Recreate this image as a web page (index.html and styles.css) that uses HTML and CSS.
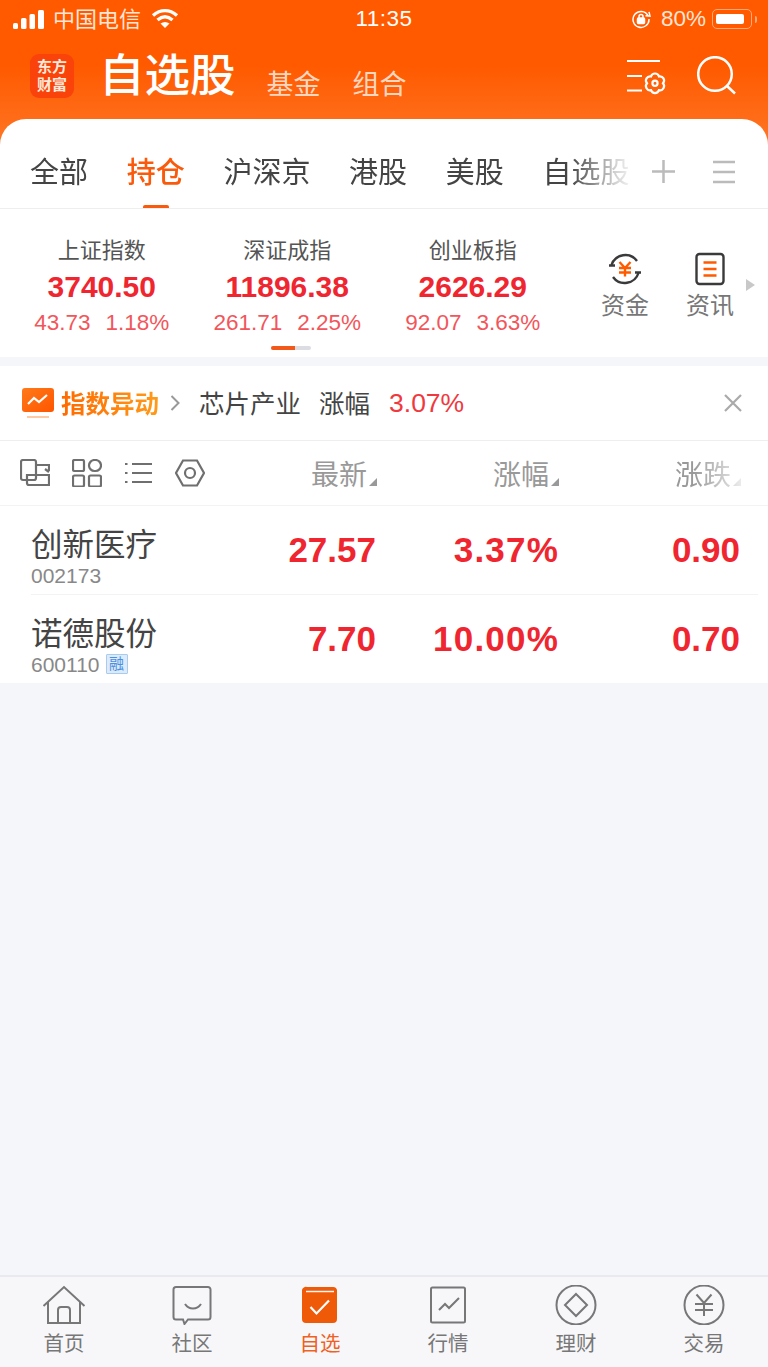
FILE: index.html
```html
<!DOCTYPE html>
<html lang="zh-CN">
<head>
<meta charset="utf-8">
<title>自选股</title>
<link rel="stylesheet" href="styles.css">
</head>
<body>
<div class="app">
  <header class="top">
    <div class="status">
      <div class="status-side">
        <svg class="signal" viewBox="0 0 31 19"><rect x="0" y="13" width="5" height="6" rx="1.500"/><rect x="8" y="8" width="5.500" height="11" rx="1.500"/><rect x="16.500" y="4" width="5.500" height="15" rx="1.500"/><rect x="25" y="0" width="6" height="19" rx="1.500"/></svg>
        <span class="carrier">中国电信</span>
        <svg class="wifi" viewBox="0 0 28 20"><path d="M2 7.500C9.500 1 18.500 1 26 7.500"/><path d="M6.500 12C11.500 7.700 16.500 7.700 21.500 12"/><path class="wifi-dot" d="M14 20l-4.500-4.600c3-2 6-2 9 0z"/></svg>
      </div>
      <span class="time">11:35</span>
      <div class="status-side status-right">
        <svg class="lock" viewBox="0 0 20 20"><path d="M17 6.500A8 8 0 1 0 18 10"/><path class="lock-arrow" d="M14.500 6.800l4.500.3-1-4.300"/><rect x="6.500" y="9" width="7" height="5.500" rx="1"/><path d="M8 9V7.500a2 2 0 0 1 4 0V9"/></svg>
        <span class="battery-text">80%</span>
        <span class="battery"><span class="battery-fill"></span></span>
        <span class="battery-cap"></span>
      </div>
    </div>
    <nav class="nav">
      <div class="logo"><span>东方</span><span>财富</span></div>
      <h1 class="title">自选股</h1>
      <span class="subtitle">基金</span>
      <span class="subtitle">组合</span>
      <div class="nav-icons">
        <svg class="icon-set" viewBox="0 0 40 34"><path d="M0 2h33M0 17h15M0 31.500h15"/><path d="M36 24.300A4.200 4.200 0 0 1 32 31.200A4.200 4.200 0 0 1 24 31.200A4.200 4.200 0 0 1 20 24.300A4.200 4.200 0 0 1 24 17.400A4.200 4.200 0 0 1 32 17.400A4.200 4.200 0 0 1 36 24.300z"/><circle cx="28" cy="24.300" r="2.600"/></svg>
        <svg class="icon-search" viewBox="0 0 40 40"><circle cx="18" cy="18" r="16.800"/><path d="M30 30l8 7.500"/></svg>
      </div>
    </nav>
    <div class="tabs">
      <div class="tab-scroll">
        <span class="tab">全部</span>
        <span class="tab tab-active">持仓</span>
        <span class="tab">沪深京</span>
        <span class="tab">港股</span>
        <span class="tab">美股</span>
        <span class="tab">自选股</span>
      </div>
      <svg class="tab-plus" viewBox="0 0 25 25"><path d="M12.500 1v23M1 12.500h23"/></svg>
      <svg class="tab-menu" viewBox="0 0 24 24"><path d="M1 2h22M1 12h22M1 22h22"/></svg>
    </div>
  </header>

  <section class="indices">
    <div class="index-list">
      <div class="index">
        <div class="index-name">上证指数</div>
        <div class="index-value">3740.50</div>
        <div class="index-change"><span>43.73</span><span>1.18%</span></div>
      </div>
      <div class="index">
        <div class="index-name">深证成指</div>
        <div class="index-value">11896.38</div>
        <div class="index-change"><span>261.71</span><span>2.25%</span></div>
        <div class="pager"><span class="pager-on"></span></div>
      </div>
      <div class="index">
        <div class="index-name">创业板指</div>
        <div class="index-value">2626.29</div>
        <div class="index-change"><span>92.07</span><span>3.63%</span></div>
      </div>
    </div>
    <div class="shortcut">
      <svg class="shortcut-icon" viewBox="0 0 34 34"><path class="ic-dark" d="M3.500 13A14.500 14.500 0 0 1 29 9"/><path class="ic-dark" d="M30.500 21A14.500 14.500 0 0 1 5 25"/><path class="ic-dark" d="M1 13.500h6M33 20.500h-6"/><path class="ic-orange" d="M11.500 10l5.500 6 5.500-6M11 16h12M11 20.500h12M17 16v8.500"/></svg>
      <span>资金</span>
    </div>
    <div class="shortcut">
      <svg class="shortcut-icon" viewBox="0 0 34 34"><rect class="ic-dark" x="3.500" y="2" width="27" height="30" rx="3"/><path class="ic-orange" d="M10.500 10.500h13M10.500 17h13M10.500 23.500h13"/></svg>
      <span>资讯</span>
    </div>
    <span class="more-arrow"></span>
  </section>

  <section class="alert">
    <svg class="alert-icon" viewBox="0 0 32 31"><defs><linearGradient id="ag" x1="0" y1="0" x2="1" y2="1"><stop offset="0" stop-color="#ff7a1a"/><stop offset="1" stop-color="#ff5500"/></linearGradient></defs><rect x="0" y="0" width="32" height="24" rx="3" fill="url(#ag)"/><path d="M6 16l6-6 5 4 8-7" fill="none" stroke="#fff" stroke-width="2.200"/><path d="M5 29h22" stroke="#ffc9a3" stroke-width="2"/></svg>
    <span class="alert-title">指数异动</span>
    <svg class="alert-chevron" viewBox="0 0 10 16"><path d="M1.500 1L8.500 8l-7 7"/></svg>
    <span class="alert-text alert-sector">芯片产业</span>
    <span class="alert-text alert-metric">涨幅</span>
    <span class="alert-pct">3.07%</span>
    <svg class="alert-close" viewBox="0 0 20 20"><path d="M2 2l16 16M18 2L2 18"/></svg>
  </section>

  <section class="toolbar">
    <div class="tools">
      <svg viewBox="0 0 30 28"><rect x="1" y="1" width="15" height="20" rx="2"/><path d="M7 16h22v10H9a2 2 0 0 1-2-2zM16 6h13v6M25 10l4 3"/></svg>
      <svg viewBox="0 0 30 28"><rect x="1" y="1" width="11" height="11" rx="1.500"/><rect x="17" y="1" width="12" height="11" rx="5.500"/><rect x="1" y="16.500" width="11" height="11" rx="1.500"/><rect x="17" y="16.500" width="12" height="11" rx="1.500"/></svg>
      <svg viewBox="0 0 30 28"><path d="M9 5h20M9 14h20M9 23h20M2 5h2.500M2 14h2.500M2 23h2.500"/></svg>
      <svg viewBox="0 0 30 28"><path d="M8 1.500h14L29 14l-7 12.500H8L1 14z"/><circle cx="15" cy="14" r="5"/></svg>
    </div>
    <span class="col-head">最新<i class="sort"></i></span>
    <span class="col-head">涨幅<i class="sort"></i></span>
    <span class="col-head col-fade">涨跌<i class="sort"></i></span>
  </section>

  <section class="stocks">
    <div class="stock">
      <div class="stock-info">
        <div class="stock-name">创新医疗</div>
        <div class="stock-code">002173</div>
      </div>
      <span class="stock-val">27.57</span>
      <span class="stock-val stock-pct">3.37%</span>
      <span class="stock-val">0.90</span>
    </div>
    <div class="stock">
      <div class="stock-info">
        <div class="stock-name">诺德股份</div>
        <div class="stock-code">600110<b class="badge">融</b></div>
      </div>
      <span class="stock-val">7.70</span>
      <span class="stock-val stock-pct">10.00%</span>
      <span class="stock-val">0.70</span>
    </div>
  </section>

  <footer class="tabbar">
    <div class="bar-item">
      <svg viewBox="0 0 44 40"><path d="M1.500 21L22 2 42.500 21M6 17.500V38h32V17.500M16 38V25a3 3 0 0 1 3-3h6a3 3 0 0 1 3 3v13"/></svg>
      <span>首页</span>
    </div>
    <div class="bar-item">
      <svg viewBox="0 0 44 40"><path d="M6 2h32a2.500 2.500 0 0 1 2.500 2.500V32a2.500 2.500 0 0 1-2.500 2.500H18l-3.500 4.500-1.500-4.500H6A2.500 2.500 0 0 1 3.500 32V4.500A2.500 2.500 0 0 1 6 2z"/><path d="M15 19c4 6 12 6 16 0"/></svg>
      <span>社区</span>
    </div>
    <div class="bar-item bar-active">
      <svg viewBox="0 0 44 40" class="bar-solid"><path d="M9 2h26a4 4 0 0 1 4 3v29a4 4 0 0 1-4 4H8a4 4 0 0 1-4-4V5a4 4 0 0 1 5-3z"/><path class="bar-lid" d="M8 6.500h28"/><path class="bar-check" d="M12.500 22l6 6.500L31 15.500"/></svg>
      <span>自选</span>
    </div>
    <div class="bar-item">
      <svg viewBox="0 0 44 40"><rect x="5" y="2.500" width="34" height="35" rx="1.500"/><path d="M13 25l6-6 4 4 10-10"/></svg>
      <span>行情</span>
    </div>
    <div class="bar-item">
      <svg viewBox="0 0 44 40"><circle cx="22" cy="20" r="19.500"/><path d="M22 9L33 20 22 31 11 20z"/></svg>
      <span>理财</span>
    </div>
    <div class="bar-item">
      <svg viewBox="0 0 44 40"><circle cx="22" cy="20" r="19.500"/><path d="M14.500 9.500L22 18l7.500-8.500M13 19h18M13 25h18M22 18v13"/></svg>
      <span>交易</span>
    </div>
  </footer>
</div>
</body>
</html>
```

FILE: styles.css
```css
* { box-sizing: border-box; }
html, body { margin: 0; padding: 0; }
body {
  font-family: "Liberation Sans", "Noto Sans CJK SC", sans-serif;
  background: #f5f6f9;
  color: #444;
}
.app { height: 1367px; display: flex; flex-direction: column; overflow: hidden; }

/* Header */
.top {
  background: linear-gradient(180deg, #ff5a00 0, #ff5a00 66px, #ff6c18 119px, #ff7a2c 150px, #fff 150px);
  display: flex;
  flex-direction: column;
}
.status {
  height: 38px;
  padding: 0 11px 0 13px;
  display: flex;
  align-items: center;
  justify-content: space-between;
  color: #fff;
  font-size: 22.500px;
  position: relative;
}
.status-side { display: flex; align-items: center; }
.signal { width: 31px; height: 19px; fill: #fff; }
.carrier { margin: -4px 0 0 9px; color: #ffe5d5; font-size: 22px; }
.wifi { width: 28px; height: 20px; margin: -2px 0 0 10px; fill: none; stroke: #fff; stroke-width: 3.400; }
.wifi-dot { fill: #fff; stroke: none; }
.time { position: absolute; left: 0; right: 0; text-align: center; letter-spacing: .5px; }
.lock { width: 20px; height: 20px; margin-left: -1px; fill: none; stroke: #fff; stroke-width: 1.500; }
.lock rect { fill: #fff; }
.battery-text { margin-left: 10px; color: #ffe5d5; }
.battery {
  width: 40px; height: 20px; margin-left: 6px; padding: 4px 3px;
  border: 1px solid #ffa97a; border-radius: 5px; display: block;
}
.battery-fill { display: block; width: 28px; height: 100%; background: #fff; border-radius: 2px; }
.battery-cap { width: 2px; height: 7px; margin-left: 3px; background: #ffa97a; border-radius: 0 2px 2px 0; }

.nav {
  height: 81px;
  padding: 0 30px;
  display: flex;
  align-items: center;
  color: #fff;
}
.logo {
  width: 44px; height: 44px; margin-top: -5px;
  background: #f9430a;
  border-radius: 9px;
  display: flex; flex-direction: column; align-items: center; justify-content: center;
  font-size: 15px; line-height: 18px; font-weight: 700; color: #ffe9dc;
}
.logo span { display: block; }
.title { margin: -4px 31px 0 25px; font-size: 45.500px; line-height: 60px; font-weight: 500; }
.subtitle { font-size: 27px; line-height: 36px; margin: 12px 32px 0 0; color: #ffd7c0; }
.nav-icons { margin-left: auto; display: flex; align-items: flex-start; height: 81px; }
.icon-set { width: 40px; height: 34px; fill: none; stroke: #fff; stroke-width: 2.200; overflow: visible; margin: 21px 30px 0 0; }
.icon-search { width: 40px; height: 40px; fill: none; stroke: #fff; stroke-width: 2.500; margin: 18px 1px 0 0; }

.tabs {
  height: 90px;
  background: #fff;
  border-radius: 26px 26px 0 0;
  border-bottom: 1px solid #eeeef0;
  display: flex;
  align-items: stretch;
  padding-left: 30px;
}
.tab-scroll {
  width: 606px;
  overflow: hidden;
  display: flex;
  gap: 38.700px;
  -webkit-mask-image: linear-gradient(90deg, #000 0, #000 540px, rgba(0,0,0,.25) 585px, transparent 606px);
  mask-image: linear-gradient(90deg, #000 0, #000 540px, rgba(0,0,0,.25) 585px, transparent 606px);
}
.tab {
  flex: none;
  height: 89px;
  padding-top: 31px;
  font-size: 29px;
  line-height: 46px;
  color: #444;
  position: relative;
}
.tab-active { color: #f95a0c; font-weight: 500; }
.tab-active::after {
  content: "";
  position: absolute;
  left: 16px; bottom: 0;
  width: 26px; height: 3px;
  background: #f95a0c;
  border-radius: 2px 2px 0 0;
}
.tab-plus { width: 25px; height: 25px; margin: 40px 0 0 15px; fill: none; stroke: #bbb; stroke-width: 2.500; }
.tab-menu { width: 24px; height: 24px; margin: 41px 0 0 36px; fill: none; stroke: #bbb; stroke-width: 2.500; }

/* Indices */
.indices {
  height: 148px;
  background: #fff;
  display: flex;
  padding-left: 9px;
  position: relative;
}
.index-list { display: flex; width: 557px; }
.index { width: 185.500px; text-align: center; padding-top: 27px; position: relative; }
.index-name { font-size: 22px; line-height: 30px; color: #555; }
.index-value { font-size: 30px; line-height: 40px; font-weight: 700; color: #ef2630; margin-top: 1px; }
.index-change {
  display: flex; justify-content: center; gap: 15px;
  font-size: 22.500px; line-height: 30px; color: #f2565b; margin-top: 1px;
}
.pager {
  position: absolute; left: 76px; top: 137px;
  width: 40px; height: 4px; background: #dcdde2; border-radius: 2px; overflow: hidden;
}
.pager-on { display: block; width: 24px; height: 4px; background: #f1581a; }
.shortcut {
  width: 86px;
  padding-top: 43px;
  margin-right: -1px;
  display: flex; flex-direction: column; align-items: center;
  font-size: 24px; line-height: 34px; color: #777;
}
.shortcut:nth-child(2) { margin-left: 16px; }
.shortcut-icon { width: 34px; height: 34px; fill: none; margin-bottom: 3px; }
.ic-dark { stroke: #3a3a3a; stroke-width: 2.400; }
.ic-orange { stroke: #ff5a00; stroke-width: 2.400; }
.more-arrow {
  width: 0; height: 0; margin: 70px 0 0 -6px;
  border-left: 9px solid #c8c8c8; border-top: 6px solid transparent; border-bottom: 6px solid transparent;
}

/* Alert */
.alert {
  height: 75px;
  margin-top: 9px;
  padding-left: 22px;
  background: #fff;
  border-bottom: 1px solid #eeeef0;
  display: flex;
  align-items: center;
}
.alert-icon { width: 32px; height: 31px; }
.alert-title {
  margin: -2px 0 0 7px;
  font-size: 24.500px;
  font-weight: 700;
  background: linear-gradient(90deg, #ff6a00, #ff9a1a);
  -webkit-background-clip: text;
  background-clip: text;
  color: transparent;
}
.alert-chevron { width: 10px; height: 16px; margin: 0 19px 0 11px; fill: none; stroke: #999; stroke-width: 2; }
.alert-text { font-size: 25.500px; color: #444; margin-top: -4px; }
.alert-metric { margin-left: 18px; }
.alert-pct { margin-left: 19px; font-size: 26.500px; color: #f0393e; }
.alert-close { width: 20px; height: 20px; margin-left: auto; margin-right: 25px; fill: none; stroke: #aaa; stroke-width: 2.200; }

/* Toolbar */
.toolbar {
  height: 65px;
  padding: 0 27px 0 20px;
  background: #fff;
  border-bottom: 1px solid #f3f3f5;
  display: flex;
  align-items: center;
}
.tools { flex: 1 1 0; min-width: 0; display: flex; gap: 21.500px; align-items: center; }
.tools svg { flex: none; width: 30px; height: 28px; fill: none; stroke: #6f6f6f; stroke-width: 2.200; }
.col-head {
  flex: none;
  width: 182px;
  text-align: right;
  font-size: 28px;
  color: #999;
}
.sort {
  display: inline-block;
  width: 0; height: 0;
  margin: 0 0 -1px 2px;
  border-bottom: 8px solid #999;
  border-left: 8px solid transparent;
}
.col-fade {
  -webkit-mask-image: linear-gradient(90deg, #000 0, #000 135px, rgba(0,0,0,.2) 182px);
  mask-image: linear-gradient(90deg, #000 0, #000 135px, rgba(0,0,0,.2) 182px);
}

/* Stocks */
.stocks { background: #fff; padding-left: 31px; }
.stock {
  height: 89px;
  margin-right: 10px;
  padding-right: 18px;
  display: flex;
  align-items: center;
  border-bottom: 1px solid #f3f3f5;
}
.stock:last-child { height: 88px; border-bottom: 0; }
.stock-info { flex: 1; margin-top: 10px; }
.stock-name { font-size: 31.500px; line-height: 40px; color: #444; }
.stock-code { font-size: 21px; line-height: 21px; color: #888; display: flex; align-items: center; }
.badge {
  width: 22px; height: 20px; margin-left: 6px;
  background: #dceaf9; border: 1px solid #a8ccf0; color: #4a90e2;
  font-size: 15px; line-height: 18px; font-weight: 400; text-align: center; border-radius: 1px;
}
.stock-val {
  flex: none;
  width: 182px;
  text-align: right;
  font-size: 35px;
  font-weight: 700;
  color: #ef2630;
}
.stock-pct { width: 183px; letter-spacing: 1.200px; }
.stock-pct + .stock-val { width: 181px; }

/* Tab bar */
.tabbar {
  margin-top: auto;
  height: 92px;
  background: #f7f7fa;
  border-top: 2px solid #e9e9ef;
  display: flex;
}
.bar-item {
  flex: 1;
  padding-top: 8px;
  display: flex; flex-direction: column; align-items: center;
  font-size: 20.500px; line-height: 30px; color: #777;
}
.bar-item svg { width: 44px; height: 40px; fill: none; stroke: #777; stroke-width: 2; margin-bottom: 4px; }
.bar-active { color: #f0601e; }
.bar-item .bar-solid { fill: #ee5a08; stroke: none; }
.bar-lid { stroke: #f7f7fa; stroke-width: 1.500; fill: none; }
.bar-check { stroke: #fff; stroke-width: 2.200; fill: none; }
```
